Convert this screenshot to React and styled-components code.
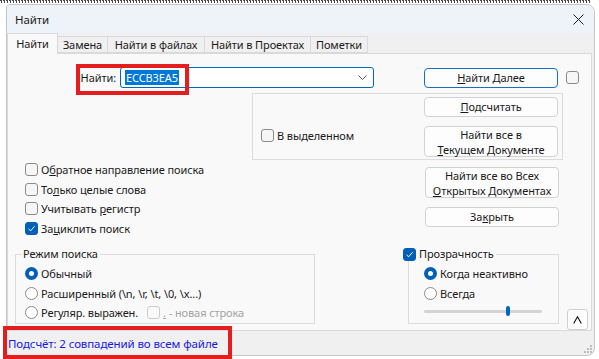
import React from 'react'
import styled, { createGlobalStyle } from 'styled-components'

const GlobalStyle = createGlobalStyle`
  html, body { margin: 0; padding: 0; background: #fff; }
  body {
    font-family: "Segoe UI", "Noto Sans", sans-serif;
    font-size: 11px;
    letter-spacing: -0.1px;
    color: #1a1a1a;
  }
`

const Screen = styled.div`
  position: relative;
  width: 599px;
  height: 359px;
  overflow: hidden;
  background: #fff;
`

const BehindStrip = styled.div`
  height: 4px;
  margin-right: 9px;
  background:
    repeating-linear-gradient(90deg, #4a4a4a 0 2px, transparent 2px 3px) 0 0 / 100% 1px no-repeat,
    repeating-linear-gradient(90deg, transparent 0 1px, #4a4a4a 1px 2px, transparent 2px 3px) 0 1px / 100% 2px no-repeat;
`

const Window = styled.div`
  margin-left: 6px;
  width: 589px;
  height: 352px;
  box-sizing: border-box;
  border: 1px solid #c6c6c6;
  border-radius: 4px 8px 8px 4px;
  background: #f0f0f0;
  display: flex;
  flex-direction: column;
  overflow: hidden;
`

const TitleBar = styled.div`
  height: 28px;
  flex: none;
  display: flex;
  align-items: center;
  justify-content: space-between;
  background: #eef3f9;
  padding-left: 8px;
`

const Title = styled.span`
  font-size: 11.5px;
  color: #1a1a1a;
`

const CloseButton = styled.div`
  width: 32px;
  height: 28px;
  display: flex;
  align-items: center;
  justify-content: center;
`

const TabStrip = styled.div`
  height: 20px;
  flex: none;
  display: flex;
  align-items: flex-end;
  position: relative;
  z-index: 1;
`

const Tab = styled.div`
  width: ${p => p.$w}px;
  height: ${p => (p.$active ? 21 : 17)}px;
  margin-bottom: ${p => (p.$active ? -1 : 0)}px;
  box-sizing: border-box;
  border: 1px solid #d9d9d9;
  border-bottom: ${p => (p.$active ? 'none' : '1px solid #d9d9d9')};
  margin-left: ${p => (p.$active ? 0 : -1)}px;
  background: ${p => (p.$active ? '#f9f9f9' : '#f0f0f0')};
  display: flex;
  align-items: center;
  justify-content: center;
  padding-bottom: ${p => (p.$active ? 2 : 0)}px;
  white-space: nowrap;
  &:first-child { margin-left: 0; }
`

const Panel = styled.div`
  height: 278px;
  flex: none;
  margin-right: 2px;
  box-sizing: border-box;
  border: 1px solid #dadada;
  background: #f9f9f9;
  display: flex;
  flex-direction: column;
`

const TopRow = styled.div`
  display: flex;
  align-items: center;
  margin-top: 13px;
  height: 21px;
`

const FindLabel = styled.label`
  width: 112px;
  box-sizing: border-box;
  padding-right: 4px;
  text-align: right;
`

const Combo = styled.div`
  width: 254px;
  height: 21px;
  box-sizing: border-box;
  border: 1px solid #0067c0;
  border-radius: 3px;
  background: #fff;
  display: flex;
  align-items: center;
  justify-content: space-between;
  padding: 0 6px 0 4px;
`

const Selected = styled.span`
  background: #0078d7;
  color: #fff;
  padding: 0 1px;
  line-height: 15px;
`

const Button = styled.button`
  width: 134px;
  height: ${p => (p.$tall ? 31 : 20)}px;
  flex: none;
  box-sizing: border-box;
  border: 1px solid ${p => (p.$primary ? '#1a6fc4' : '#d2d2d2')};
  border-radius: 4px;
  background: #fdfdfd;
  font: inherit;
  letter-spacing: inherit;
  color: #1a1a1a;
  line-height: ${p => (p.$tall ? 15 : 14)}px;
  padding: 0;
  margin-left: ${p => p.$ml || 0}px;
  u { text-underline-offset: 1px; }
`

const SelectionBox = styled.div`
  margin: 5px 0 0 244px;
  width: 311px;
  height: 67px;
  box-sizing: border-box;
  border: 1px solid #dcdcdc;
  display: flex;
  justify-content: space-between;
  padding: 3px 4px 0 8px;
`

const ButtonColumn = styled.div`
  display: flex;
  flex-direction: column;
  gap: 9px;
  margin-top: ${p => p.$mt || 0}px;
`

const MiddleRow = styled.div`
  display: flex;
  justify-content: space-between;
  padding-right: 32px;
`

const OptionList = styled.div`
  display: flex;
  flex-direction: column;
  padding-left: 17px;
`

const Option = styled.label`
  display: flex;
  align-items: center;
  gap: 3px;
  height: ${p => p.$h || 19.5}px;
  margin-top: ${p => p.$mt || 0}px;
  color: #1a1a1a;
  white-space: nowrap;
  u { text-underline-offset: 1px; }
`

const Check = styled.span`
  width: 13px;
  height: 13px;
  flex: none;
  box-sizing: border-box;
  border-radius: 3px;
  border: 1px solid ${p => (p.$disabled ? '#cccccc' : p.$checked ? '#005fb8' : '#8a8a8a')};
  background: ${p => (p.$checked ? '#005fb8' : p.$disabled ? '#f9f9f9' : '#f6f6f6')};
  display: inline-flex;
  align-items: center;
  justify-content: center;
`

const RadioDot = styled.span`
  width: 13px;
  height: 13px;
  flex: none;
  box-sizing: border-box;
  border-radius: 50%;
  border: ${p => (p.$checked ? '4px solid #005fb8' : '1px solid #8a8a8a')};
  background: #fff;
`

const BottomRow = styled.div`
  display: flex;
  align-items: flex-start;
  margin-top: 9px;
  padding-left: 7px;
`

const GroupBox = styled.fieldset`
  margin: 0 0 0 ${p => p.$ml || 0}px;
  width: ${p => p.$w}px;
  height: 77px;
  box-sizing: border-box;
  border: 1px solid #dcdcdc;
  padding: 3px 0 0 ${p => p.$pl}px;
  min-width: 0;
`

const Legend = styled.legend`
  line-height: 14px;
  padding: 0 2px 0 1px;
  margin-left: ${p => p.$ml}px;
  display: flex;
  align-items: center;
  gap: 3px;
`

const Inline = styled.span`
  display: inline-flex;
  align-items: center;
  gap: 3px;
  margin-left: ${p => p.$ml || 0}px;
  color: ${p => (p.$disabled ? '#a3a3a3' : 'inherit')};
  u { text-underline-offset: 1px; }
`

const Track = styled.div`
  position: relative;
  width: 118px;
  height: 3px;
  margin-top: 7px;
  border-radius: 2px;
  background: #d4d4d4;
`

const Thumb = styled.div`
  position: absolute;
  left: 82px;
  top: -4px;
  width: 4px;
  height: 10px;
  border-radius: 2px;
  background: #0067c0;
`

const UpButton = styled.div`
  width: 21px;
  height: 21px;
  box-sizing: border-box;
  margin: 62px 0 0 8px;
  border: 1px solid #cfcfcf;
  border-radius: 3px;
  background: #fdfdfd;
  display: flex;
  align-items: center;
  justify-content: center;
`

const StatusBar = styled.div`
  flex: 1;
  display: flex;
  align-items: center;
  justify-content: space-between;
  padding-left: 1px;
  font-size: 11.5px;
  color: #1717e6;
`

const Grip = styled.svg`
  align-self: flex-end;
  margin: 0 2px 2px 0;
`

const Marker = styled.div`
  position: absolute;
  box-sizing: border-box;
  border: 4px solid #e41e1e;
  left: ${p => p.$x}px;
  top: ${p => p.$y}px;
  width: ${p => p.$w}px;
  height: ${p => p.$h}px;
  pointer-events: none;
`

const CheckMark = () => (
  <svg width="9" height="9" viewBox="0 0 9 9">
    <path d="M1.5 4.8 L3.6 6.8 L7.6 2.2" fill="none" stroke="#fff" strokeWidth="1" />
  </svg>
)

const Checkbox = ({ checked, disabled }) => (
  <Check $checked={checked} $disabled={disabled}>{checked && <CheckMark />}</Check>
)

const tabs = [
  { label: 'Найти', w: 51, active: true },
  { label: 'Замена', w: 51 },
  { label: 'Найти в файлах', w: 98 },
  { label: 'Найти в Проектах', w: 107 },
  { label: 'Пометки', w: 58 },
]

export default function App() {
  return (
    <Screen>
      <GlobalStyle />
      <BehindStrip />
      <Window>
        <TitleBar>
          <Title>Найти</Title>
          <CloseButton>
            <svg width="11" height="11" viewBox="0 0 11 11">
              <path d="M0.5 0.5 L10.5 10.5 M10.5 0.5 L0.5 10.5" stroke="#1a1a1a" strokeWidth="1" />
            </svg>
          </CloseButton>
        </TitleBar>
        <TabStrip>
          {tabs.map(t => (
            <Tab key={t.label} $w={t.w} $active={t.active}>{t.label}</Tab>
          ))}
        </TabStrip>
        <Panel>
          <TopRow>
            <FindLabel>Найти:</FindLabel>
            <Combo>
              <Selected>ECCB3EA5</Selected>
              <svg width="9" height="5" viewBox="0 0 9 5">
                <path d="M0.5 0.5 L4.5 4.5 L8.5 0.5" fill="none" stroke="#5c5c5c" strokeWidth="1" />
              </svg>
            </Combo>
            <Button $primary $ml={50}><u>Н</u>айти Далее</Button>
            <Inline $ml={8}><Checkbox /></Inline>
          </TopRow>

          <SelectionBox>
            <Option $h={13} $mt={32}><Checkbox /><span>В выделенном</span></Option>
            <ButtonColumn>
              <Button><u>П</u>одсчитать</Button>
              <Button $tall>Найти все в<br /><u>Т</u>екущем Документе</Button>
            </ButtonColumn>
          </SelectionBox>

          <MiddleRow>
            <OptionList>
              <Option><Checkbox /><span>О<u>б</u>ратное направление поиска</span></Option>
              <Option><Checkbox /><span>То<u>л</u>ько целые слова</span></Option>
              <Option><Checkbox /><span>Учитывать <u>р</u>егистр</span></Option>
              <Option><Checkbox checked /><span>За<u>ц</u>иклить поиск</span></Option>
            </OptionList>
            <ButtonColumn $mt={7}>
              <Button $tall>Найти все во Всех<br /><u>О</u>ткрытых Документах</Button>
              <Button>За<u>к</u>рыть</Button>
            </ButtonColumn>
          </MiddleRow>

          <BottomRow>
            <GroupBox $w={300} $pl={9}>
              <Legend $ml={-3}>Режим поиска</Legend>
              <Option><RadioDot $checked /><span>Обычный</span></Option>
              <Option><RadioDot /><span>Расширенный (\n, \r, \t, \0, \x...)</span></Option>
              <Option>
                <RadioDot /><span>Регуляр. выражен.</span>
                <Inline $ml={6} $disabled>
                  <Checkbox disabled />
                  <span><u>.</u>&nbsp;- новая строка</span>
                </Inline>
              </Option>
            </GroupBox>
            <GroupBox $w={151} $pl={15} $ml={93}>
              <Legend $ml={-22}><Checkbox checked /><span>Прозрачность</span></Legend>
              <Option><RadioDot $checked /><span>Когда неактивно</span></Option>
              <Option><RadioDot /><span>Всегда</span></Option>
              <Track><Thumb /></Track>
            </GroupBox>
            <UpButton>
              <svg width="9" height="8" viewBox="0 0 9 8">
                <path d="M0.7 7.5 L4.5 0.8 L8.3 7.5" fill="none" stroke="#1a1a1a" strokeWidth="1.2" />
              </svg>
            </UpButton>
          </BottomRow>
        </Panel>
        <StatusBar>
          <span>Подсчёт: 2 совпадений во всем файле</span>
          <Grip width="9" height="9" viewBox="0 0 9 9">
            {[[7, 1], [4, 4], [7, 4], [1, 7], [4, 7], [7, 7]].map(([x, y]) => (
              <rect key={`${x}-${y}`} x={x} y={y} width="2" height="2" fill="#bdbdbd" />
            ))}
          </Grip>
        </StatusBar>
      </Window>
      <Marker $x={76} $y={64} $w={113} $h={31} />
      <Marker $x={3} $y={326} $w={229} $h={33} />
    </Screen>
  )
}
